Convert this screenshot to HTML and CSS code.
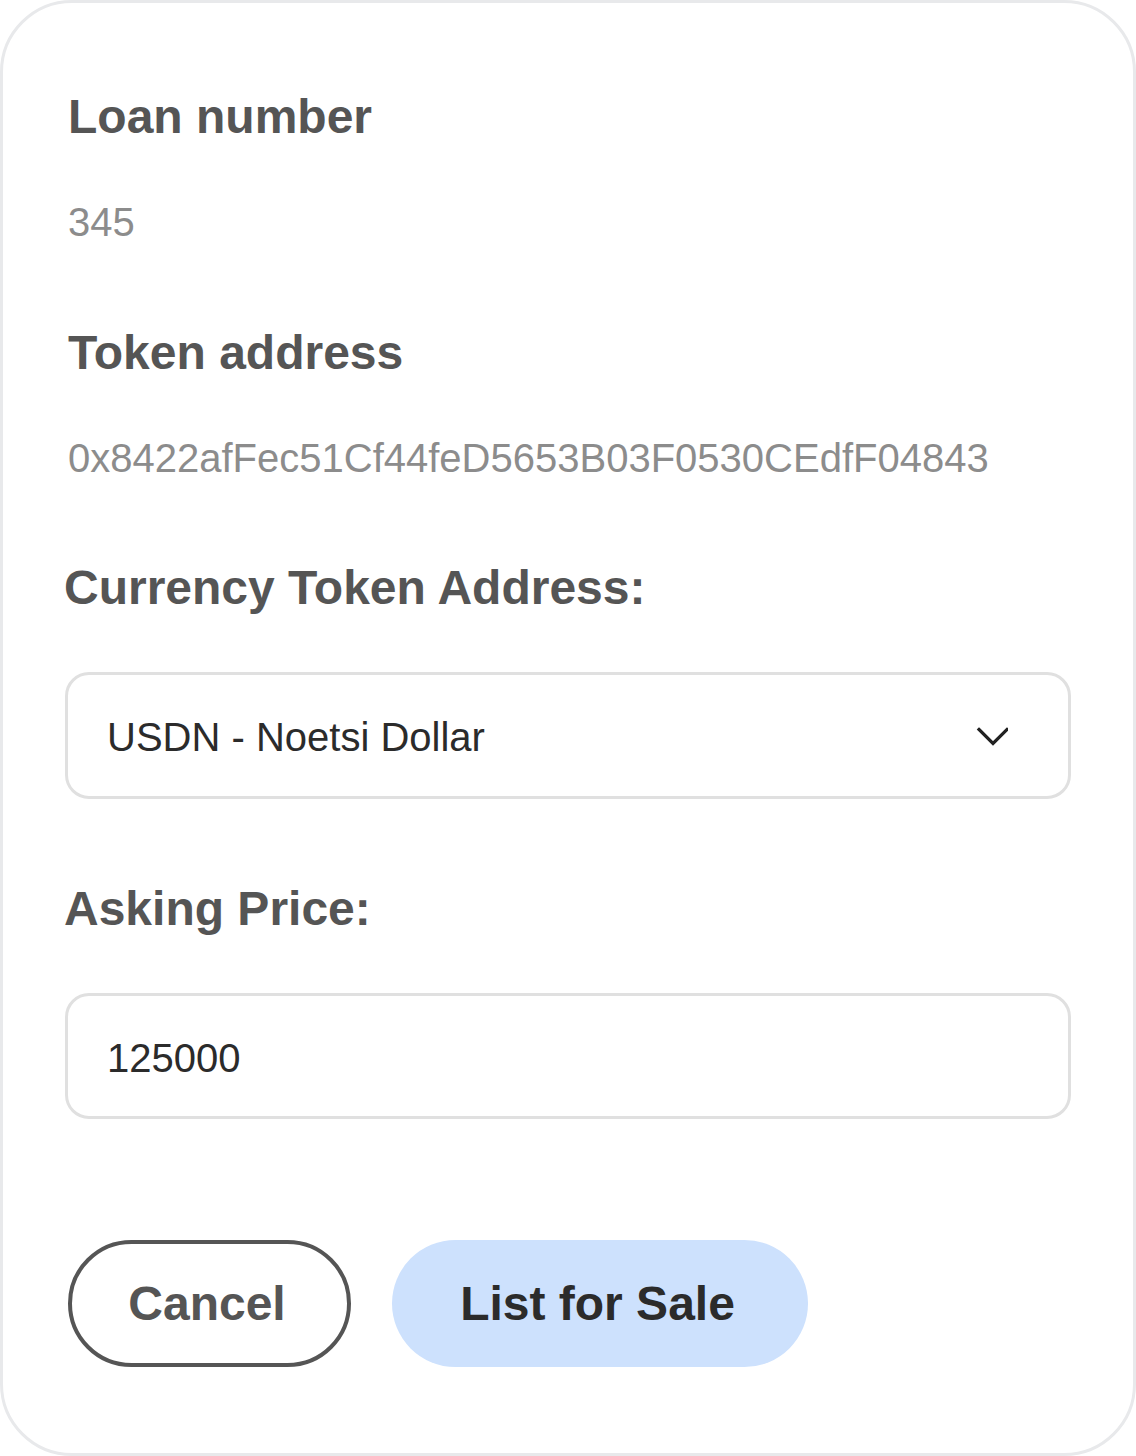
FILE: index.html
```html
<!DOCTYPE html>
<html lang="en">
<head>
<meta charset="utf-8">
<title>List for Sale</title>
<link rel="stylesheet" href="styles.css">
</head>
<body>
<div class="card">
  <h2 class="label info-label first">Loan number</h2>
  <div class="value">345</div>
  <h2 class="label info-label section">Token address</h2>
  <div class="value">0x8422afFec51Cf44feD5653B03F0530CEdfF04843</div>
  <label class="label form-label currency">Currency Token Address:</label>
  <div class="select">
    <span class="select-text">USDN - Noetsi Dollar</span>
    <svg class="chevron" width="32" height="20" viewBox="0 0 32 20" aria-hidden="true">
      <polyline points="3,2.5 17,16.5 31,2.5" fill="none" stroke="#222" stroke-width="3.2" stroke-linecap="square" stroke-linejoin="miter"/>
    </svg>
  </div>
  <label class="label form-label asking">Asking Price:</label>
  <input class="input" type="text" value="125000">
  <div class="actions">
    <button class="btn btn-cancel"><span class="btn-text">Cancel</span></button>
    <button class="btn btn-primary"><span class="btn-text">List for Sale</span></button>
  </div>
</div>
</body>
</html>
```

FILE: styles.css
```css
html, body {
  margin: 0;
  padding: 0;
  background: #ffffff;
}

.card {
  box-sizing: border-box;
  width: 1136px;
  height: 1456px;
  border: 3px solid #e8e9eb;
  border-radius: 72px;
  padding: 84px 62px 0 62px;
  font-family: "Liberation Sans", Arial, Helvetica, sans-serif;
  display: flex;
  flex-direction: column;
  align-items: flex-start;
}

.label {
  display: block;
  margin: 0;
  font-size: 48px;
  line-height: 56px;
  font-weight: 700;
  color: #555555;
}

.info-label {
  padding-left: 3px;
}

.info-label.first {
  margin-top: 2px;
}

.info-label.section {
  margin-top: 79px;
}

.value {
  margin-top: 53px;
  padding-left: 3px;
  font-size: 40px;
  line-height: 48px;
  color: #8c8c8c;
}

.form-label {
  margin-left: -1px;
}

.form-label.currency {
  margin-top: 78px;
}

.form-label.asking {
  margin-top: 82px;
}

.select {
  box-sizing: border-box;
  margin-top: 56px;
  width: 100%;
  height: 127px;
  border: 3px solid #e0e0e0;
  border-radius: 24px;
  padding: 0 60px 0 39px;
  display: flex;
  align-items: center;
  justify-content: space-between;
}

.select-text {
  font-size: 40px;
  line-height: 48px;
  color: #2b2b2b;
  padding-top: 3px;
}

.chevron {
  display: block;
  margin-top: 3px;
}

.input {
  box-sizing: border-box;
  margin: 56px 0 0 0;
  width: 100%;
  height: 126px;
  border: 3px solid #e0e0e0;
  border-radius: 24px;
  padding: 4px 39px 0 39px;
  font-family: "Liberation Sans", Arial, Helvetica, sans-serif;
  font-size: 40px;
  color: #2b2b2b;
  background: #ffffff;
  outline: none;
  appearance: none;
}

.actions {
  margin-top: 121px;
  margin-left: 3px;
  display: flex;
  gap: 41px;
}

.btn {
  box-sizing: border-box;
  height: 127px;
  border-radius: 64px;
  padding: 0;
  font-family: "Liberation Sans", Arial, Helvetica, sans-serif;
  font-size: 48px;
  font-weight: 700;
  line-height: 56px;
  cursor: pointer;
  display: flex;
  align-items: center;
  justify-content: center;
}

.btn-text {
  display: block;
  margin-right: 5px;
}

.btn-cancel {
  width: 283px;
  background: #ffffff;
  border: 4px solid #555555;
  color: #555555;
}

.btn-primary {
  width: 416px;
  background: #cde1fd;
  border: none;
  color: #2b2b2b;
}
```
